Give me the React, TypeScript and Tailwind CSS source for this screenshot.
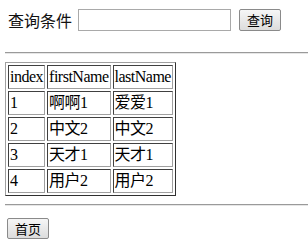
import React from "react";

const rows = [
  ["1", "啊啊1", "爱爱1"],
  ["2", "中文2", "中文2"],
  ["3", "天才1", "天才1"],
  ["4", "用户2", "用户2"],
];

const cell =
  "px-[1px] py-[1px] leading-[20px] text-left align-middle whitespace-nowrap border border-t-[#404040] border-l-[#404040] border-r-[#a0a0a0] border-b-[#a0a0a0] font-normal";

function Rule() {
  return (
    <div className="ml-[5px] flex flex-col">
      <div className="h-px bg-[#9a9a9a]" />
      <div className="h-px bg-[#e6e6e6]" />
    </div>
  );
}

export default function App() {
  return (
    <div className="w-[308px] h-[251px] bg-white text-black overflow-hidden font-['Liberation_Serif','Noto_Sans_CJK_SC',serif]">
      <div className="mt-[9px] ml-[8px] flex items-center h-[22px]">
        <span className="text-[16px] leading-[22px] font-['Noto_Sans_CJK_SC',sans-serif] text-[#111]">查询条件</span>
        <input
          type="text"
          className="ml-[6px] w-[153px] h-[22px] border border-[#a9a9a9] bg-white outline-none"
        />
        <button className="ml-[8px] w-[42px] h-[22px] rounded-[2px] border border-[#8a8a8a] bg-gradient-to-b from-[#f6f6f6] to-[#dcdcdc] text-[13px] leading-[18px] font-['Noto_Sans_CJK_SC',sans-serif] text-black">
          查询
        </button>
      </div>

      <div className="mt-[21px]">
        <Rule />
      </div>

      <table className="mt-[8px] ml-[5px] border-separate border-spacing-[2px] border border-t-[#a0a0a0] border-l-[#a0a0a0] border-r-[#303030] border-b-[#303030] text-[16px] tracking-[-0.5px]">
        <thead>
          <tr>
            <th className={cell}>index</th>
            <th className={cell}>firstName</th>
            <th className={cell}>lastName</th>
          </tr>
        </thead>
        <tbody>
          {rows.map((r) => (
            <tr key={r[0]}>
              {r.map((v, i) => (
                <td key={i} className={cell}>
                  {v}
                </td>
              ))}
            </tr>
          ))}
        </tbody>
      </table>

      <div className="mt-[8px]">
        <Rule />
      </div>

      <div className="mt-[11px] ml-[7px]">
        <button className="w-[42px] h-[21px] rounded-[2px] border border-[#8a8a8a] bg-gradient-to-b from-[#f6f6f6] to-[#dcdcdc] text-[13px] leading-[17px] font-['Noto_Sans_CJK_SC',sans-serif] text-black">
          首页
        </button>
      </div>
    </div>
  );
}
